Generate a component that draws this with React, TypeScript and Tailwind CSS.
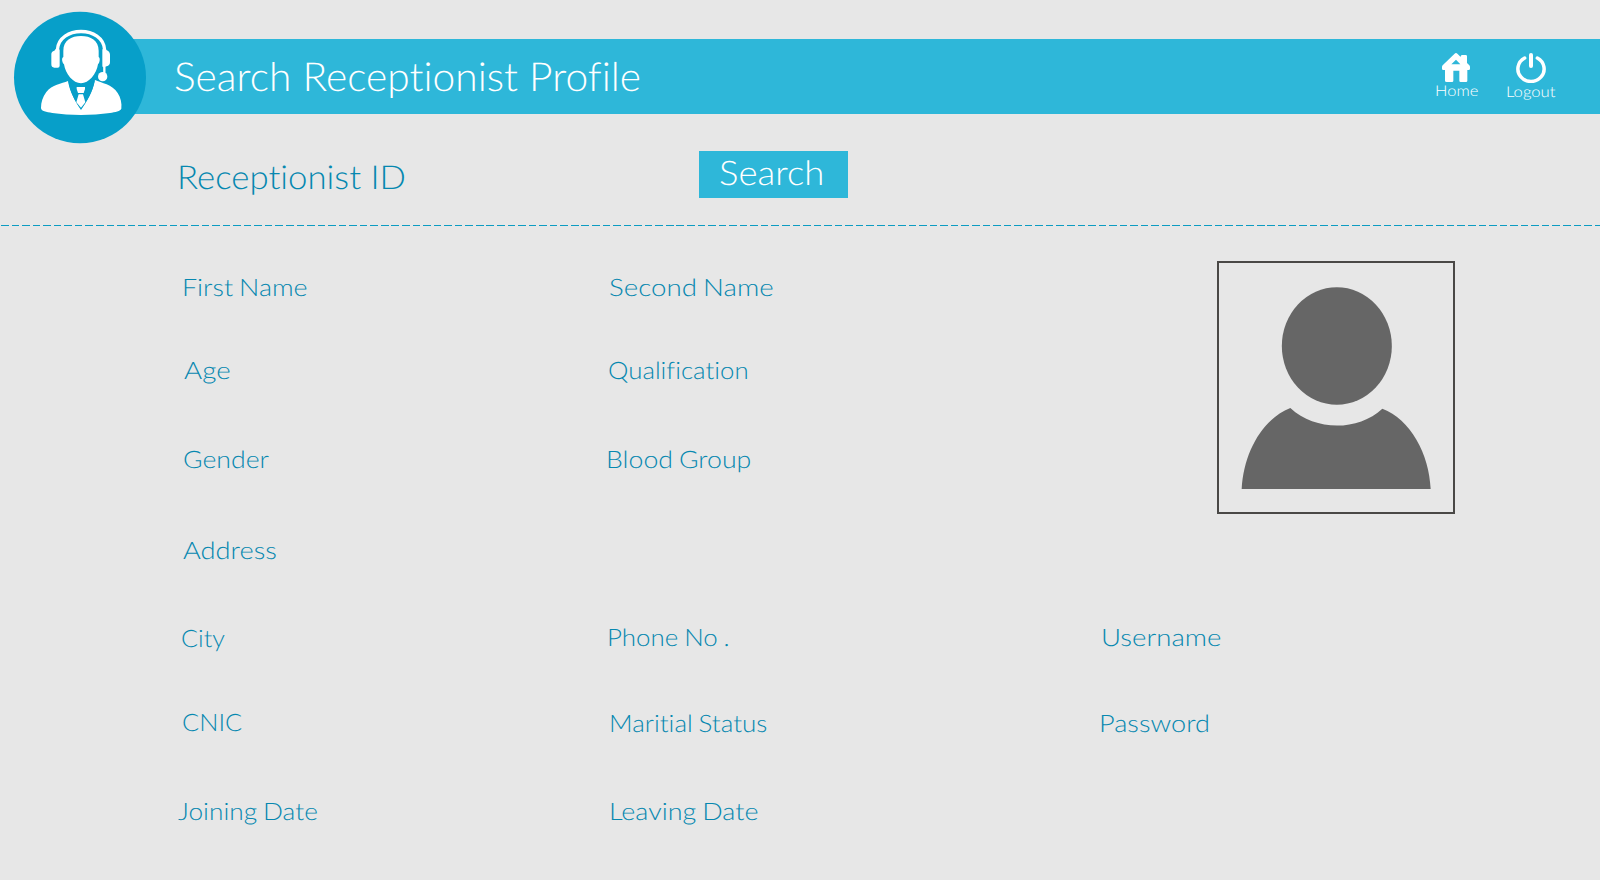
const textBase =
  "block w-max origin-left whitespace-pre font-['Lato','Open_Sans',sans-serif] font-light tracking-[0.01px] [text-rendering:geometricPrecision]";

function Label({ text, className }: { text: string; className: string }) {
  return (
    <span className={`${textBase} text-[24px] leading-8 text-[#0688b0] [word-spacing:-1.2px] ${className}`}>{text}</span>
  );
}

function AgentAvatar() {
  return (
    <svg viewBox="0 0 480 450" className="absolute left-0 top-0 h-[150px] w-[160px]">
      <ellipse cx="240" cy="232.5" rx="198" ry="197" fill="#079fc9" />
      <path
        d="M190 152C190 121 214 108 243 108C272 108 296 121 296 152V171C301 173 300 187 294 193C290 222 266 250 243 250C220 250 196 222 192 193C186 187 184 173 190 171Z"
        fill="#fff"
      />
      <path d="M172 150C176 76 310 76 314 150" fill="none" stroke="#fff" strokeWidth="10" />
      <path d="M168 146H175Q179 146 179 151V197Q179 203 173 203H163Q154 203 154 193V162Q154 154 163 152Z" fill="#fff" />
      <path d="M307 150Q307 146 311 146L318 149Q330 154 330 164V187Q330 196 320 199L311 202Q307 202 307 197Z" fill="#fff" />
      <path d="M313 195V220" stroke="#fff" strokeWidth="7" />
      <circle cx="308" cy="230" r="14" fill="#fff" />
      <path
        d="M204 243C210 277 226 305 243 330C260 305 278 277 285 240C304 249 337 253 353 279C362 293 366 309 364 326C362 333 345 336 330 339C275 347 210 347 157 339C139 336 123 333 123 324C123 307 128 291 139 276C156 254 185 251 204 243Z"
        fill="#fff"
      />
      <path d="M205 243C210 275 225 304 243 328C261 304 278 275 284 242C265 261 222 261 205 243Z" fill="#079fc9" />
      <path d="M230 261H255V267L251 279H234L230 267Z" fill="#fff" />
      <path d="M236 283H249L256 307L243 323L229 307Z" fill="#fff" />
    </svg>
  );
}

function HomeIcon() {
  return (
    <svg viewBox="126 69 84 87" className="h-[29px] w-7" fill="#fff">
      <path
        fillRule="evenodd"
        d="M168 69Q170 69 173 72L182 81V79Q183 75 187 75H197Q201 75 201 79V99L208 106Q210 108 210 111V116Q210 120 206 120H202V152Q202 156 198 156H182Q178 156 178 152V122H160V152Q160 156 156 156H140Q135 156 135 152V120H130Q126 120 126 116V111Q126 108 128 106L163 72Q166 69 168 69ZM168 89L154 103H181Z"
      />
    </svg>
  );
}

function PowerIcon() {
  return (
    <svg viewBox="0 0 90 90" className="h-[30px] w-[30px]" fill="none" stroke="#fff" strokeLinecap="round">
      <path d="M26 15A39.3 37.5 0 1 0 64 15" strokeWidth="10.5" />
      <path d="M45 6V39" strokeWidth="12" />
    </svg>
  );
}

function PhotoPlaceholder() {
  return (
    <div className="ml-[119px] h-[253px] w-[238px] border-2 border-[#4a4846]">
      <svg viewBox="57 39 702 747" className="h-[249px] w-[234px]" fill="#666">
        <ellipse cx="410.5" cy="288" rx="165" ry="176.5" />
        <path d="M125 717C131 606 188 507 271 474C347 544 473 544 547 476C631 507 688 612 692 717Z" />
      </svg>
    </div>
  );
}

export default function App() {
  return (
    <div className="relative flex h-[880px] w-[1600px] flex-col overflow-hidden bg-[#e7e7e7]">
      <header className="ml-20 mt-[39px] flex h-[75px] shrink-0 items-start bg-[#2eb7d9] pl-[94.2px]">
        <h1 className={`${textBase} mt-[13px] scale-x-[1.018] text-[40px] leading-[48px] text-white`}>
          Search Receptionist Profile
        </h1>
        <nav className="ml-auto flex items-start pr-[42px] pt-[14px]">
          <a className="flex w-[71px] flex-col pl-px">
            <span className="ml-[7px]">
              <HomeIcon />
            </span>
            <span className={`${textBase} scale-x-[1.1] text-[15px] leading-[18px] text-white`}>Home</span>
          </a>
          <a className="flex w-[53px] flex-col">
            <span className="ml-[11px]">
              <PowerIcon />
            </span>
            <span className={`${textBase} ml-px scale-x-[1.11] text-[15px] leading-[18px] text-white`}>Logout</span>
          </a>
        </nav>
      </header>
      <AgentAvatar />

      <section className="flex h-[111px] shrink-0 items-start">
        <div className="w-[699px] pl-[176.7px] pt-[43px]">
          <span className={`${textBase} scale-x-[1.054] text-[33px] leading-10 text-[#0688b0]`}>Receptionist ID</span>
        </div>
        <button className="mt-[37px] h-[47px] w-[149px] bg-[#2eb7d9] pb-[3px] pl-[20.4px]">
          <span className={`${textBase} scale-x-[1.075] text-[34px] leading-10 text-white`}>Search</span>
        </button>
      </section>
      <div className="h-px shrink-0 bg-[repeating-linear-gradient(90deg,transparent_0px,transparent_1px,#0c9cc2_1px,#0c9cc2_8.6px,transparent_8.6px,transparent_10.554px)]" />

      <main className="flex items-start pl-[178px]">
        <div className="flex w-[427px] flex-col pt-[46px]">
          <Label text="First Name" className="ml-[3.5px] scale-x-[1.12]" />
          <Label text="Age" className="ml-[6.3px] mt-[51px] scale-x-[1.155]" />
          <Label text="Gender" className="ml-[4.7px] mt-[57px] scale-x-[1.11]" />
          <Label text="Address" className="ml-[5.3px] mt-[59px] scale-x-[1.135]" />
          <Label text="City" className="ml-[2.8px] mt-[56px] scale-x-[1.05]" />
          <Label text="CNIC" className="ml-[3.8px] mt-[52px] scale-x-[1.06]" />
          <Label text="Joining Date" className="mt-[57px] scale-x-[1.095]" />
        </div>
        <div className="flex w-[493px] flex-col pt-[46px]">
          <Label text="Second Name" className="ml-[4.1px] scale-x-[1.154]" />
          <Label text="Qualification" className="ml-[3px] mt-[51px] scale-x-[1.075]" />
          <Label text="Blood Group" className="ml-[0.8px] mt-[57px] scale-x-[1.112]" />
          <Label text="Phone No ." className="ml-[2.4px] mt-[146px] scale-x-[1.08]" />
          <Label text="Maritial Status" className="ml-[3.5px] mt-[54px] scale-x-[1.082]" />
          <Label text="Leaving Date" className="ml-[3.5px] mt-[56px] scale-x-[1.122]" />
        </div>
        <div className="flex flex-col pt-[35px]">
          <PhotoPlaceholder />
          <Label text="Username" className="ml-[3.4px] mt-[108px] scale-x-[1.15]" />
          <Label text="Password" className="ml-[1.4px] mt-[54px] scale-x-[1.13]" />
        </div>
      </main>
    </div>
  );
}
